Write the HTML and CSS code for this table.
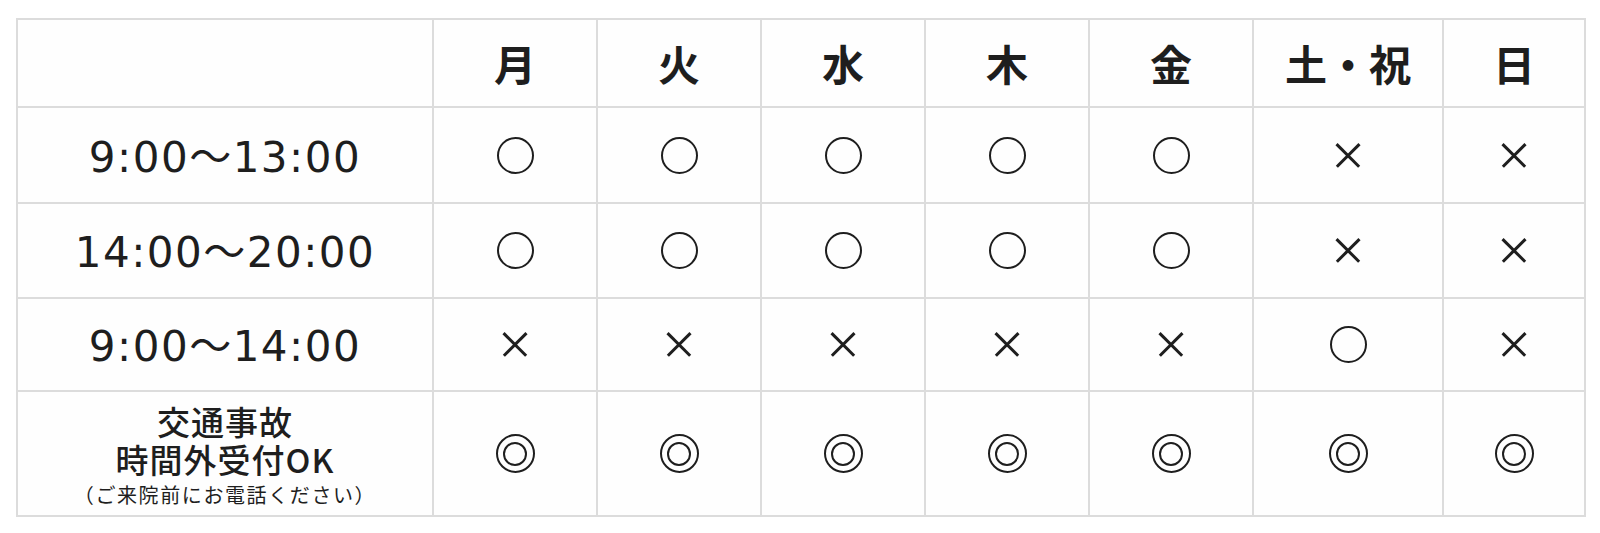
FILE: index.html
```html
<!DOCTYPE html>
<html lang="ja">
<head>
<meta charset="utf-8">
<title>診療時間</title>
<link rel="stylesheet" href="styles.css">
</head>
<body>
<div class="wrap">
<table class="hours">
  <colgroup>
    <col class="c-label">
    <col class="c-day"><col class="c-day"><col class="c-day"><col class="c-day"><col class="c-day">
    <col class="c-sat">
    <col class="c-sun">
  </colgroup>
  <thead>
    <tr class="r-head">
      <th></th>
      <th>月</th><th>火</th><th>水</th><th>木</th><th>金</th><th>土・祝</th><th>日</th>
    </tr>
  </thead>
  <tbody>
    <tr class="r1">
      <th class="time">9:00～13:00</th>
      <td><span class="mk-o"></span></td><td><span class="mk-o"></span></td><td><span class="mk-o"></span></td><td><span class="mk-o"></span></td><td><span class="mk-o"></span></td>
      <td><span class="mk-x"></span></td><td><span class="mk-x"></span></td>
    </tr>
    <tr class="r2">
      <th class="time">14:00～20:00</th>
      <td><span class="mk-o"></span></td><td><span class="mk-o"></span></td><td><span class="mk-o"></span></td><td><span class="mk-o"></span></td><td><span class="mk-o"></span></td>
      <td><span class="mk-x"></span></td><td><span class="mk-x"></span></td>
    </tr>
    <tr class="r3">
      <th class="time">9:00～14:00</th>
      <td><span class="mk-x"></span></td><td><span class="mk-x"></span></td><td><span class="mk-x"></span></td><td><span class="mk-x"></span></td><td><span class="mk-x"></span></td>
      <td><span class="mk-o"></span></td><td><span class="mk-x"></span></td>
    </tr>
    <tr class="r4">
      <th class="note">
        <div class="n-big">交通事故</div>
        <div class="n-big">時間外受付OK</div>
        <div class="n-small">（ご来院前にお電話ください）</div>
      </th>
      <td><span class="mk-oo"></span></td><td><span class="mk-oo"></span></td><td><span class="mk-oo"></span></td><td><span class="mk-oo"></span></td><td><span class="mk-oo"></span></td>
      <td><span class="mk-oo"></span></td><td><span class="mk-oo"></span></td>
    </tr>
  </tbody>
</table>
</div>
</body>
</html>
```

FILE: styles.css
```css
html, body {
  margin: 0;
  padding: 0;
  background: #ffffff;
}
body {
  font-family: "Noto Sans CJK JP", "Noto Sans", sans-serif;
  color: #1e1e1e;
}
.wrap {
  padding: 18px 0 0 16px;
}
.hours {
  border-collapse: collapse;
  table-layout: fixed;
  width: 1568px;
  background: #fefefe;
}
.c-label { width: 416px; }
.c-day { width: 164px; }
.c-sat { width: 190px; }
.c-sun { width: 142px; }

.hours th,
.hours td {
  border: 2px solid #dcdcdc;
  text-align: center;
  vertical-align: middle;
  padding: 0;
}
.r-head { height: 88px; }
.r1 { height: 96px; }
.r2 { height: 95px; }
.r3 { height: 93px; }
.r4 { height: 125px; }

.r-head th {
  font-size: 42px;
  font-weight: 700;
  line-height: 1.2;
}
.time {
  font-family: "DejaVu Sans", "Noto Sans CJK JP", sans-serif;
  font-weight: 400;
  font-size: 42px;
  letter-spacing: 1.5px;
  line-height: 1.2;
  padding-top: 6px !important;
}
.note {
  font-weight: 500;
  padding-top: 6px !important;
}
.n-big {
  font-size: 33px;
  line-height: 38px;
  letter-spacing: 1px;
}
.n-small {
  font-size: 20px;
  font-weight: 400;
  letter-spacing: 1.6px;
  line-height: 34px;
}

.mk-o,
.mk-x,
.mk-oo {
  display: block;
  margin: 0 auto;
  position: relative;
  box-sizing: border-box;
}
.mk-o {
  width: 37px;
  height: 37px;
  border: 2px solid #1e1e1e;
  border-radius: 50%;
}
.mk-oo {
  width: 39px;
  height: 39px;
  border: 2px solid #1e1e1e;
  border-radius: 50%;
}
.mk-oo::after {
  content: "";
  position: absolute;
  left: 50%;
  top: 50%;
  width: 24px;
  height: 24px;
  margin: -12px 0 0 -12px;
  box-sizing: border-box;
  border: 2px solid #1e1e1e;
  border-radius: 50%;
}
.mk-x {
  width: 23px;
  height: 23px;
}
.mk-x::before,
.mk-x::after {
  content: "";
  position: absolute;
  left: 50%;
  top: 50%;
  width: 32px;
  height: 2.5px;
  margin: -1.25px 0 0 -16px;
  background: #1e1e1e;
}
.mk-x::before { transform: rotate(45deg); }
.mk-x::after { transform: rotate(-45deg); }
```
